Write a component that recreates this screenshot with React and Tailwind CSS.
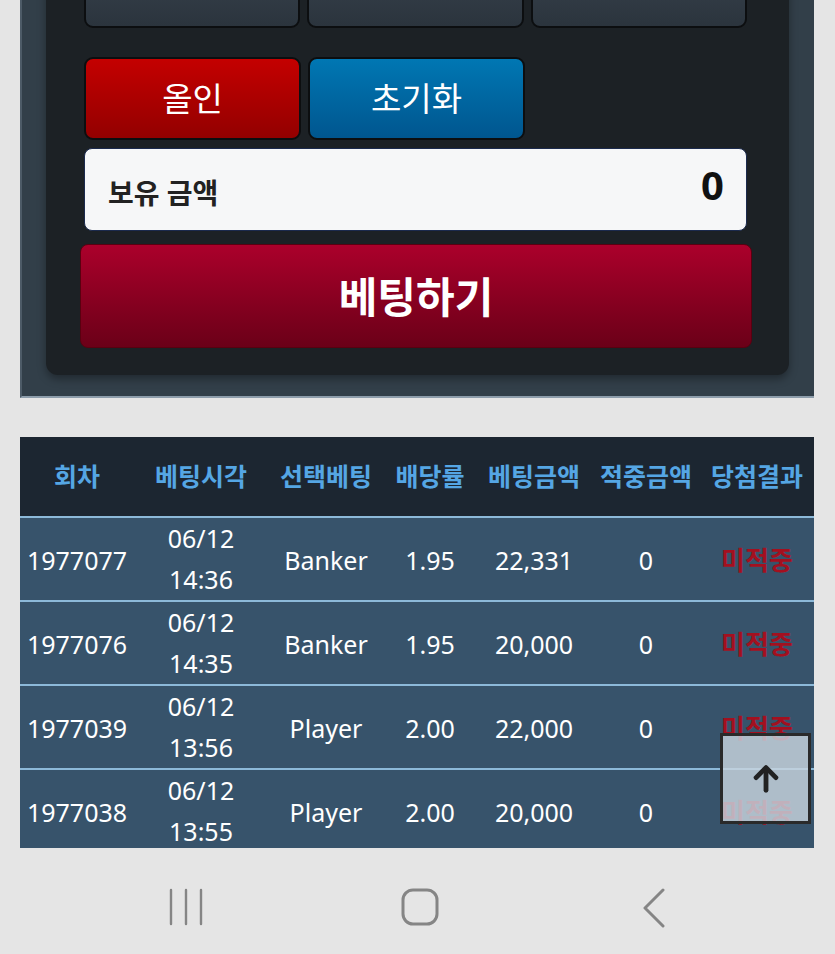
import React from "react";

// chip buttons (top row is scrolled mostly off-screen)
const CHIPS = ["10,000", "50,000", "1,000,000"];

const ROWS = [
  { id: "1977077", date: "06/12", time: "14:36", pick: "Banker", odds: "1.95", amount: "22,331", win: "0" },
  { id: "1977076", date: "06/12", time: "14:35", pick: "Banker", odds: "1.95", amount: "20,000", win: "0" },
  { id: "1977039", date: "06/12", time: "13:56", pick: "Player", odds: "2.00", amount: "22,000", win: "0" },
  { id: "1977038", date: "06/12", time: "13:55", pick: "Player", odds: "2.00", amount: "20,000", win: "0" },
];

const HEADERS = ["회차", "베팅시각", "선택베팅", "배당률", "베팅금액", "적중금액", "당첨결과"];

const FONT = "font-['Noto_Sans','Noto_Sans_CJK_KR',sans-serif]";
const COLS = "grid grid-cols-[114px_134px_116px_92px_116px_108px_114px]";

const App = () => {
  return (
    <div className={`h-[954px] w-[835px] overflow-hidden bg-[#e5e5e5] ${FONT}`}>
      {/* Betting panel */}
      <section className="ml-[20px] h-[398px] w-[794px] overflow-hidden border-b-2 border-l-2 border-[#4d5b67] border-b-[#8d9dab] bg-[#323f49]">
        <div className="ml-[24px] w-[743px] rounded-b-[12px] bg-[#1c2125] pb-[27px] pl-[38px] pr-[42px] shadow-[0_4px_8px_rgba(0,0,0,0.35)]">
          <div className="-mt-[54px] flex gap-[7px]">
            {CHIPS.map((c) => (
              <button
                key={c}
                className="flex h-[82px] w-[217px] items-center justify-center rounded-[9px] border-2 border-[#0c0e10] bg-gradient-to-b from-[#3b4651] to-[#2b343d] pb-[22px] text-[28px] text-white"
              >
                {c}
              </button>
            ))}
          </div>

          <div className="mt-[29px] flex gap-[7px]">
            <button className="flex h-[83px] w-[217px] items-center justify-center rounded-[9px] border-2 border-[#0c0e10] bg-gradient-to-b from-[#c40000] to-[#930000] text-[33px] text-white">
              올인
            </button>
            <button className="flex h-[83px] w-[217px] items-center justify-center rounded-[9px] border-2 border-[#0c0e10] bg-gradient-to-b from-[#0077b3] to-[#00568f] text-[33px] text-white">
              초기화
            </button>
          </div>

          <div className="mt-[8px] flex h-[83px] items-center justify-between rounded-[8px] border border-[#1b2a4d] bg-[#f6f7f8] pl-[23px] pr-[22px]">
            <span className="mt-[6px] text-[28px] font-bold text-[#222]">보유 금액</span>
            <span className="-mt-[10px] text-[40px] font-bold text-[#111]">0</span>
          </div>

          <button className="-ml-[4px] mt-[13px] flex h-[104px] w-[672px] items-center justify-center rounded-[8px] border border-[#5a0010] bg-gradient-to-b from-[#ab002b] to-[#6b0018] text-[42px] font-bold text-white">
            베팅하기
          </button>
        </div>
      </section>

      {/* Bet history table */}
      <section className="relative ml-[20px] mt-[39px] h-[411px] w-[794px] overflow-hidden bg-[#37536b]">
        <div className={`${COLS} h-[81px] items-center border-b-2 border-[#8cb9d9] bg-[#1c2631] text-[25px] font-bold text-[#55a6e4]`}>
          {HEADERS.map((h) => (
            <div key={h} className="whitespace-nowrap text-center">
              {h}
            </div>
          ))}
        </div>

        {ROWS.map((r) => (
          <div
            key={r.id}
            className={`${COLS} h-[84px] items-center border-b-2 border-[#8cb9d9] text-[25px] text-white`}
          >
            <div className="pt-[3px] text-center">{r.id}</div>
            <div className="text-center leading-[41px]">
              <div>{r.date}</div>
              <div>{r.time}</div>
            </div>
            <div className="pt-[3px] text-center">{r.pick}</div>
            <div className="pt-[3px] text-center">{r.odds}</div>
            <div className="pt-[3px] text-center">{r.amount}</div>
            <div className="pt-[3px] text-center">{r.win}</div>
            <div className="pt-[3px] text-center text-[26px] font-bold text-[#a3101f]">미적중</div>
          </div>
        ))}

        {/* scroll to top */}
        <button className="absolute left-[700px] top-[296px] flex h-[91px] w-[91px] items-center justify-center border-[3px] border-[#2a2a2a] bg-[rgba(200,212,222,0.82)]">
          <svg width="34" height="34" viewBox="0 0 24 24" fill="none" stroke="#222" strokeWidth="3.4" strokeLinecap="round" strokeLinejoin="round">
            <path d="M12 20V5" />
            <path d="M5 11l7-7 7 7" />
          </svg>
        </button>
      </section>

      {/* Android nav bar */}
      <nav className="flex h-[106px] items-start pt-[40px]">
        <svg className="ml-[168px]" width="36" height="38" viewBox="0 0 36 38" fill="none" stroke="#858585" strokeWidth="2.4" strokeLinecap="round">
          <path d="M3 2v34M18 2v34M33 2v34" />
        </svg>
        <svg className="ml-[197px]" width="38" height="38" viewBox="0 0 38 38" fill="none" stroke="#858585" strokeWidth="3">
          <rect x="2" y="2" width="34" height="34" rx="10" />
        </svg>
        <svg className="ml-[202px]" width="26" height="40" viewBox="0 0 26 40" fill="none" stroke="#858585" strokeWidth="3" strokeLinecap="round" strokeLinejoin="round">
          <path d="M22 2L4 20l18 18" />
        </svg>
      </nav>
    </div>
  );
};

export default App;
